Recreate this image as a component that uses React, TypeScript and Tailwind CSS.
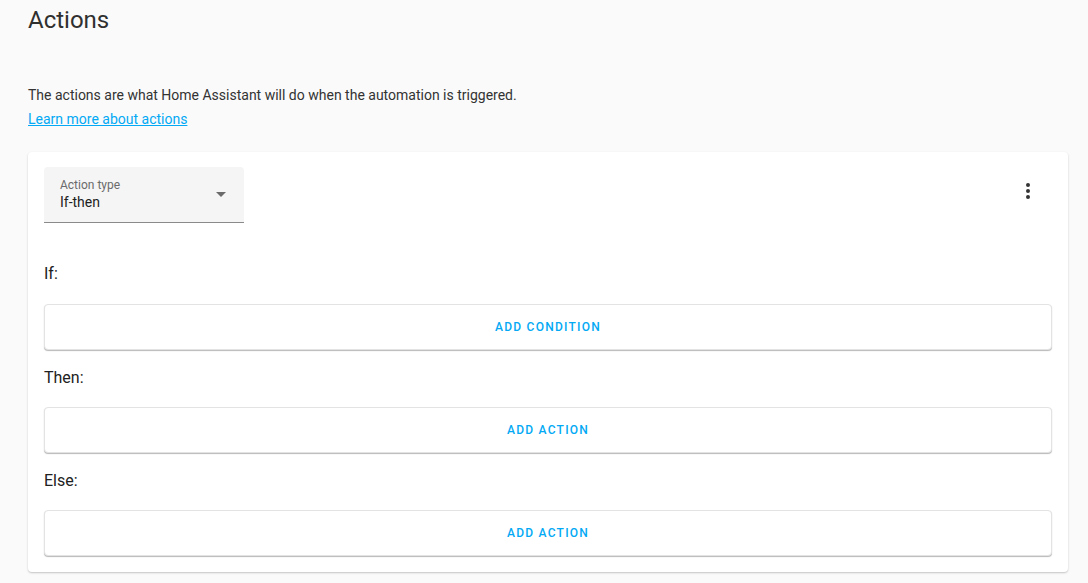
import React from 'react';

// Blocks of the if-then action
function AddButton({ label }: { label: string }) {
  return (
    <button className="flex h-[46px] w-full items-center justify-center rounded border border-[#e3e3e3] bg-white text-xs font-medium tracking-[1.25px] text-[#03a9f4] shadow-[0_1px_1px_rgba(0,0,0,0.28)]">
      {label}
    </button>
  );
}

function Section({ title, children, first }: { title: string; children: React.ReactNode; first?: boolean }) {
  return (
    <div>
      <div className={`${first ? 'mt-[39px] mb-[18px]' : 'mt-4 mb-[17px]'} text-base leading-6 text-[#212121]`}>{title}</div>
      {children}
    </div>
  );
}

export default function App() {
  return (
    <div
      className="min-h-[583px] bg-[#fafafa] pl-7 pr-5 pt-1 text-[#212121]"
      style={{ fontFamily: 'Roboto, "Noto Sans", sans-serif' }}
    >
      <h1 className="text-2xl font-normal leading-8 text-[#303030]">Actions</h1>

      <p className="mt-[49px] text-sm leading-5 text-[#333]">
        The actions are what Home Assistant will do when the automation is triggered.
      </p>
      <div className="mt-[2px] text-sm leading-6">
        <a href="#" className="text-[#03a9f4] underline">
          Learn more about actions
        </a>
      </div>

      <div className="mt-[21px] rounded bg-white px-4 pb-4 pt-[15px] shadow-[0_1px_2px_rgba(0,0,0,0.22)]">
        <div className="flex items-start justify-between">
          {/* select */}
          <div className="relative h-[56px] w-[200px] rounded-t bg-[#f5f5f5] border-b border-[#8a8a8a] px-4">
            <div className="pt-[11px] text-xs leading-[14px] text-[#6b6b6b]">Action type</div>
            <div className="text-sm leading-5 text-[#212121]">If-then</div>
            <svg className="absolute right-[18px] top-[25px]" width="10" height="5" viewBox="0 0 10 5">
              <path d="M0 0 L10 0 L5 5 Z" fill="#6b6b6b" />
            </svg>
          </div>
          <button className="mr-3 mt-[12px] flex h-6 w-6 items-center justify-center">
            <svg width="24" height="24" viewBox="0 0 24 24">
              <path
                fill="#333"
                d="M12,16A2,2 0 0,1 14,18A2,2 0 0,1 12,20A2,2 0 0,1 10,18A2,2 0 0,1 12,16M12,10A2,2 0 0,1 14,12A2,2 0 0,1 12,14A2,2 0 0,1 10,12A2,2 0 0,1 12,10M12,4A2,2 0 0,1 14,6A2,2 0 0,1 12,8A2,2 0 0,1 10,6A2,2 0 0,1 12,4Z"
              />
            </svg>
          </button>
        </div>

        <Section title="If:" first>
          <AddButton label="ADD CONDITION" />
        </Section>
        <Section title="Then:">
          <AddButton label="ADD ACTION" />
        </Section>
        <Section title="Else:">
          <AddButton label="ADD ACTION" />
        </Section>
      </div>
    </div>
  );
}
